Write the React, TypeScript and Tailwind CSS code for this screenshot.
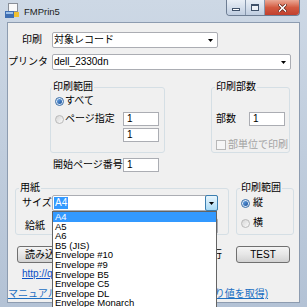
import React from 'react';

const sizes = ['A4', 'A5', 'A6', 'B5 (JIS)', 'Envelope #10', 'Envelope #9', 'Envelope B5', 'Envelope C5', 'Envelope DL', 'Envelope Monarch'];

const Arrow = () => (
  <svg width="5" height="3" viewBox="0 0 5 3">
    <path d="M0 0h5L2.5 3z" fill="#000" />
  </svg>
);

const Combo = ({ children, className = '', hot = false }: { children?: React.ReactNode; className?: string; hot?: boolean }) => (
  <div className={`h-[16px] bg-white border border-[#abadb3] rounded-[2px] flex items-stretch ${className}`}>
    <div className="flex-1 flex items-center pl-[1px] overflow-hidden whitespace-nowrap">{children}</div>
    {hot ? (
      <div className="w-[13px] -my-[1px] -mr-[1px] border border-[#3c7fb1] rounded-[2px] bg-gradient-to-b from-[#eaf6fd] to-[#a9daf5] flex items-center justify-center">
        <Arrow />
      </div>
    ) : (
      <div className="w-[13px] flex items-center justify-center">
        <Arrow />
      </div>
    )}
  </div>
);

const TextBox = ({ value = '1', className = '' }: { value?: string; className?: string }) => (
  <div className={`h-[14px] w-[36px] bg-white border border-[#abadb3] flex items-center pl-[3px] ${className}`}>{value}</div>
);

const Radio = ({ checked = false }: { checked?: boolean }) => (
  <span
    className={`w-[9px] h-[9px] rounded-full border flex items-center justify-center shrink-0 ${
      checked ? 'border-[#3d6fa6] bg-[#dbe8f6]' : 'border-[#b9b9b9] bg-gradient-to-br from-[#d6d6d6] to-[#fbfbfb]'
    }`}
  >
    {checked && <span className="w-[5px] h-[5px] rounded-full bg-gradient-to-br from-[#6aa8ea] to-[#1a4f96]" />}
  </span>
);

const Group = ({ label, lx = 'ml-[3px]', className = '', children }: { label: string; lx?: string; className?: string; children?: React.ReactNode }) => (
  <div className={`border border-[#d5dfe5] rounded-[3px] flex flex-col shrink-0 ${className}`}>
    <span className={`-mt-[7px] self-start bg-[#f0f0f0] px-[1px] h-[12px] leading-[12px] ${lx}`}>{label}</span>
    {children}
  </div>
);

const Button = ({ children, className = '' }: { children: React.ReactNode; className?: string }) => (
  <div className={`h-[17px] border border-[#707070] rounded-[3px] bg-gradient-to-b from-[#f4f4f4] via-[#e6e6e6] to-[#d2d2d2] flex items-center ${className}`}>
    {children}
  </div>
);

export default function App() {
  return (
    <div className="w-[307px] h-[307px] overflow-hidden flex flex-col bg-gradient-to-b from-[#cdd8e5] to-[#b3c2d5] font-['Liberation_Sans_Narrow','Liberation_Sans','Noto_Sans_CJK_JP',sans-serif] text-[10px] leading-[12px] text-black">
      {/* title bar */}
      <div className="h-[22px] shrink-0 flex items-start">
        <svg className="ml-[4px] mt-[3px]" width="16" height="16" viewBox="0 0 16 16">
          <rect x="4.5" y="0.5" width="9" height="8" fill="#fafafa" stroke="#8a8f98" />
          <path d="M1 8h9v7H1z" fill="#3f6fb3" />
          <path d="M2 9h7v2H2z" fill="#9cc0ea" />
          <path d="M10 9h5v5h-5z" fill="#f0c030" />
        </svg>
        <span className="ml-[4px] mt-[6px] font-['Liberation_Sans',sans-serif] text-[9.5px] text-[#1c1c1c]">FMPrin5</span>
        <div className="ml-auto mr-[7px] flex h-[16px] border border-t-0 border-[#6d7d93] rounded-b-[4px] overflow-hidden">
          <div className="w-[19px] bg-gradient-to-b from-[#e9eff6] to-[#bfcde0] border-r border-[#8797ad] flex items-end justify-center pb-[4px]">
            <span className="w-[8px] h-[3px] bg-white border border-[#40526a]" />
          </div>
          <div className="w-[19px] bg-gradient-to-b from-[#e9eff6] to-[#bfcde0] border-r border-[#8797ad] flex items-center justify-center">
            <span className="w-[8px] h-[7px] border border-t-2 border-[#40526a] bg-white/60" />
          </div>
          <div className="w-[34px] bg-gradient-to-b from-[#eaa896] via-[#d35a41] to-[#c0402e] flex items-center justify-center">
            <svg width="9" height="8" viewBox="0 0 9 8">
              <path d="M1.5 1l6 6M7.5 1l-6 6" stroke="#5a1a10" strokeWidth="3" strokeLinecap="square" />
              <path d="M1.5 1l6 6M7.5 1l-6 6" stroke="#fff" strokeWidth="1.6" strokeLinecap="square" />
            </svg>
          </div>
        </div>
      </div>

      {/* client area */}
      <div className="flex-1 px-[7px] pb-[4px] flex">
        <div className="flex-1 relative bg-[#f0f0f0] border border-[#8d9cb0] flex flex-col">
          <div className="mt-[9px] h-[16px] flex items-center">
            <span className="w-[44px] pl-[14px]">印刷</span>
            <Combo className="w-[166px]">対象レコード</Combo>
          </div>
          <div className="mt-[6px] h-[16px] flex items-center">
            <span className="w-[44px] whitespace-nowrap">プリンタ</span>
            <Combo className="w-[239px]">dell_2330dn</Combo>
          </div>

          <div className="mt-[17px] flex items-start">
            <div className="ml-[42px] w-[115px] flex flex-col">
              <Group label="印刷範囲" lx="ml-[1px]" className="h-[66px]">
                <div className="mt-[2px] h-[12px] flex items-center pl-[4px]">
                  <Radio checked />
                  <span className="ml-[1px]">すべて</span>
                </div>
                <div className="mt-[5px] h-[14px] flex items-center pl-[4px]">
                  <Radio />
                  <span className="ml-[1px]">ページ指定</span>
                  <TextBox className="ml-auto mr-[5px]" />
                </div>
                <TextBox className="mt-[2px] self-end mr-[5px]" />
              </Group>
              <div className="mt-[5px] h-[14px] flex items-center pl-[3px]">
                <span className="whitespace-nowrap">開始ページ番号</span>
                <TextBox className="ml-auto mr-[6px]" />
              </div>
            </div>
            <Group label="印刷部数" className="ml-[46px] w-[79px] h-[66px]">
              <div className="mt-[19px] h-[14px] flex items-center pl-[4px]">
                <span>部数</span>
                <TextBox className="w-[35px] ml-auto mr-[4px]" />
              </div>
              <div className="mt-[14px] h-[10px] flex items-center pl-[4px]">
                <span className="w-[10px] h-[10px] border border-[#b8b8b8] bg-[#f6f6f6] shrink-0" />
                <span className="ml-[2px] whitespace-nowrap text-[#a3a3a3]">部単位で印刷</span>
              </div>
            </Group>
          </div>

          <div className="mt-[16px] flex items-start">
            <Group label="用紙" className="ml-[7px] w-[214px] h-[47px]">
              <div className="mt-[1px] h-[16px] flex items-center">
                <span className="w-[36px] pl-[6px] whitespace-nowrap">サイズ</span>
                <Combo className="w-[166px]" hot>
                  <span className="bg-[#3399ff] text-white px-[1px]">A4</span>
                </Combo>
              </div>
              <div className="mt-[7px] h-[16px] flex items-center">
                <span className="w-[36px] pl-[9px]">給紙</span>
                <Combo className="w-[166px]" />
              </div>
            </Group>
            <Group label="印刷範囲" className="ml-[7px] w-[58px] h-[47px]">
              <div className="mt-[3px] h-[12px] flex items-center pl-[4px]">
                <Radio checked />
                <span className="ml-[3px]">縦</span>
              </div>
              <div className="mt-[8px] h-[12px] flex items-center pl-[4px]">
                <Radio />
                <span className="ml-[3px]">横</span>
              </div>
            </Group>
          </div>

          <div className="mt-[11px] h-[17px] flex items-center">
            <Button className="ml-[9px] w-[64px] pl-[7px]">
              <span className="whitespace-nowrap">読み込</span>
            </Button>
            <span className="ml-auto">行</span>
            <Button className="ml-[14px] w-[54px] mr-[9px] justify-center">TEST</Button>
          </div>

          <div className="mt-[5px] h-[12px] flex items-center pl-[14px] text-[#0a4fc4]">
            <span className="underline whitespace-nowrap">http://q</span>
          </div>
          <div className="mt-[8px] h-[12px] flex items-center text-[#1b6fc2]">
            <span className="underline whitespace-nowrap">マニュアル</span>
            <span className="ml-[157px] underline whitespace-nowrap">り値を取得)</span>
          </div>

          {/* open dropdown list */}
          <div className="absolute left-[44px] top-[188px] w-[165px] bg-white border border-[#646464] flex flex-col">
            {sizes.map((s, i) => (
              <div
                key={s}
                className={`h-[9.6px] leading-[9.6px] pl-[2px] text-[9.5px] whitespace-nowrap ${i === 0 ? 'bg-[#3399ff] text-white' : ''}`}
              >
                {s}
              </div>
            ))}
          </div>
        </div>
      </div>
    </div>
  );
}
